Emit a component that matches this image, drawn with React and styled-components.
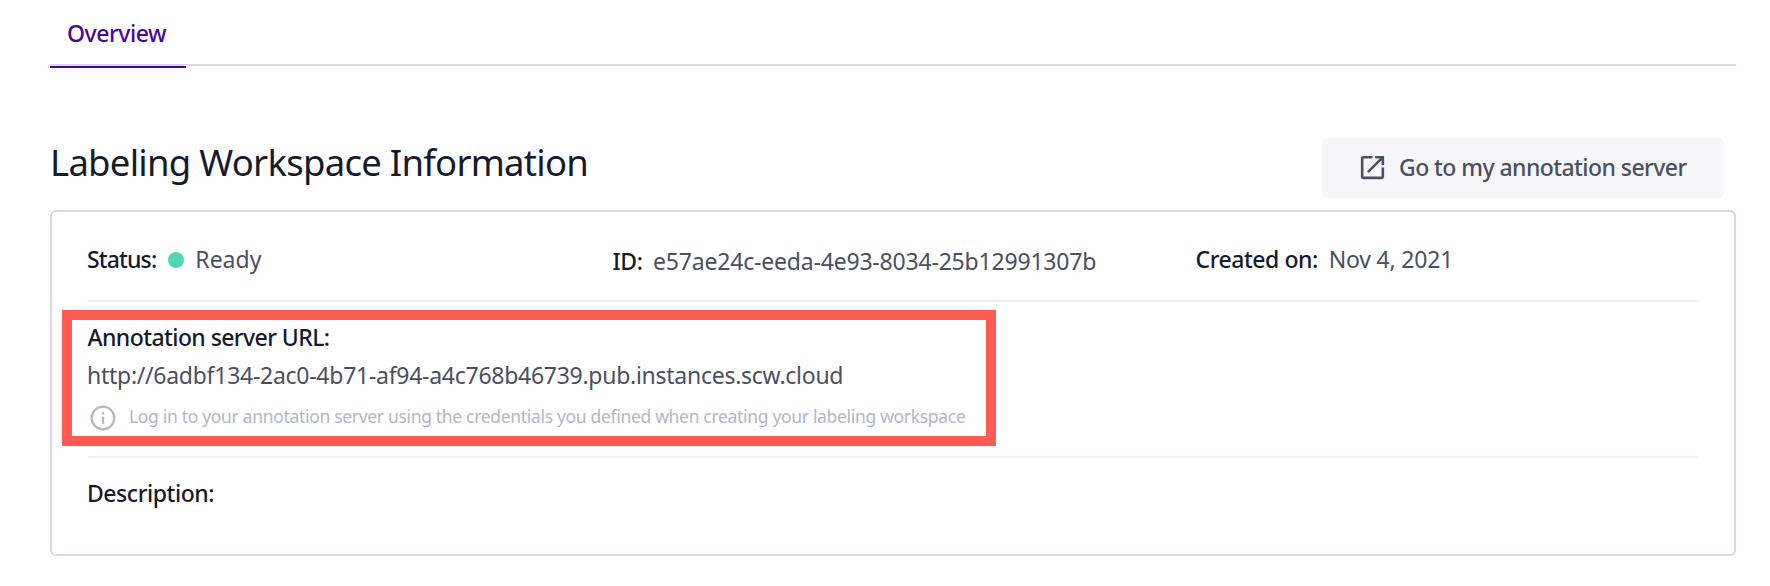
import React from "react";
import styled, { createGlobalStyle } from "styled-components";

const GlobalStyle = createGlobalStyle`
  * { box-sizing: border-box; }
  body { margin: 0; background: #fff; font-family: "Noto Sans", sans-serif; }
`;

const Page = styled.main`
  width: 1770px;
  height: 586px;
  padding: 0 34px 0 50px;
  overflow: hidden;
`;
const Tabs = styled.nav`
  display: flex;
  height: 66px;
  border-bottom: 2px solid #d5d9e9;
`;
const Tab = styled.a`
  width: 136px;
  height: 68px;
  padding-left: 17px;
  border-bottom: 2px solid #4f0599;
  color: #4f0599;
  font-size: 23px;
  font-weight: 500;
  line-height: 66px;
  letter-spacing: -0.45px;
  white-space: nowrap;
`;
const Header = styled.header`
  display: flex;
  justify-content: space-between;
  align-items: flex-start;
  height: 144px;
  padding: 72px 12px 0 0;
`;
const Title = styled.h1`
  margin: 0;
  color: #151a2d;
  font-size: 36.5px;
  font-weight: 400;
  line-height: 48px;
  letter-spacing: -0.74px;
  white-space: nowrap;
`;
const ServerButton = styled.button`
  display: flex;
  align-items: center;
  width: 402px;
  height: 60px;
  padding: 0 0 2px 35px;
  gap: 11px;
  border: 0;
  border-radius: 5px;
  background: #f6f6f8;
  color: #4a4f62;
  font: 500 23px/58px "Noto Sans", sans-serif;
  letter-spacing: -0.56px;
  white-space: nowrap;
`;
const Card = styled.section`
  height: 346px;
  padding: 0 36px;
  border: 2px solid #d5d9e9;
  border-radius: 6px;
`;
const Facts = styled.div`
  display: grid;
  grid-template-columns: 524.5px 583px 1fr;
  height: 90px;
  border-bottom: 2px solid #eceffe;
`;
const Fact = styled.div`
  display: flex;
  align-items: center;
  height: 40px;
  margin-top: ${(p) => p.$top || 27}px;
`;
const Label = styled.span`
  margin-left: ${(p) => p.$shift || 0}px;
  color: #151a2d;
  font-size: 23px;
  font-weight: 500;
  line-height: ${(p) => p.$line || 40}px;
  letter-spacing: ${(p) => p.$track || 0}px;
  white-space: nowrap;
`;
const Value = styled.span`
  color: #4a4f62;
  font-size: 23px;
  line-height: ${(p) => p.$line || 40}px;
  margin-left: ${(p) => p.$gap || 0}px;
  letter-spacing: ${(p) => p.$track || 0}px;
  white-space: nowrap;
`;
const StatusDot = styled.i`
  width: 16px;
  height: 16px;
  margin: 2px 0 0 12px;
  border-radius: 50%;
  background: #50d6b4;
`;
const Server = styled.div`
  height: 156px;
  padding-top: 8px;
  border-bottom: 2px solid #eceffe;
`;
const Highlight = styled.div`
  display: flex;
  flex-direction: column;
  width: 934px;
  height: 136px;
  margin-left: -26px;
  padding-left: 16px;
  border: 10px solid #ff5b52;
`;
const Hint = styled.div`
  display: flex;
  align-items: center;
  height: 42px;
  padding-left: 2px;
  gap: 13px;
  color: #b2b6c8;

  svg { flex: none; }
`;
const HintText = styled.span`
  margin-bottom: 3px;
  font-size: 17.5px;
  line-height: 38px;
  letter-spacing: -0.32px;
  white-space: nowrap;
`;
const Description = styled.div`
  padding-top: 15px;
`;

const OpenIcon = () => (
  <svg width="31" height="31" viewBox="0 0 24 24" fill="currentColor">
    <path d="M19 19H5V5h7V3H5a2 2 0 0 0-2 2v14a2 2 0 0 0 2 2h14c1.1 0 2-.9 2-2v-7h-2v7zM14 3v2h3.59l-9.83 9.83 1.41 1.41L19 6.41V10h2V3h-7z" />
  </svg>
);
const InfoIcon = () => (
  <svg width="26" height="26" viewBox="0 0 26 26" fill="none" stroke="currentColor" strokeWidth="2.3">
    <circle cx="13" cy="13" r="11.3" />
    <path d="M13 11.8v7" />
    <path d="M13 7.2v2.4" />
  </svg>
);

export default function App() {
  return (
    <>
      <GlobalStyle />
      <Page>
        <Tabs>
          <Tab>Overview</Tab>
        </Tabs>
        <Header>
          <Title>Labeling Workspace Information</Title>
          <ServerButton>
            <OpenIcon />
            Go to my annotation server
          </ServerButton>
        </Header>
        <Card>
          <Facts>
            <Fact>
              <Label $shift={-1} $track={-0.85}>Status:</Label>
              <StatusDot />
              <Value $gap={11}>Ready</Value>
            </Fact>
            <Fact $top={29}>
              <Label $track={-0.4}>ID:</Label>
              <Value $gap={10.5} $track={-0.19}>e57ae24c-eeda-4e93-8034-25b12991307b</Value>
            </Fact>
            <Fact>
              <Label $track={-0.45}>Created on:</Label>
              <Value $gap={11} $track={-0.2}>Nov 4, 2021</Value>
            </Fact>
          </Facts>
          <Server>
            <Highlight>
              <Label $line={34} $shift={-0.5} $track={-0.57}>Annotation server URL:</Label>
              <Value $line={43} $gap={-1} $track={-0.27}>
                http://6adbf134-2ac0-4b71-af94-a4c768b46739.pub.instances.scw.cloud
              </Value>
              <Hint>
                <InfoIcon />
                <HintText>
                  Log in to your annotation server using the credentials you defined when creating your labeling workspace
                </HintText>
              </Hint>
            </Highlight>
          </Server>
          <Description>
            <Label $shift={-1} $track={-0.45}>Description:</Label>
          </Description>
        </Card>
      </Page>
    </>
  );
}
